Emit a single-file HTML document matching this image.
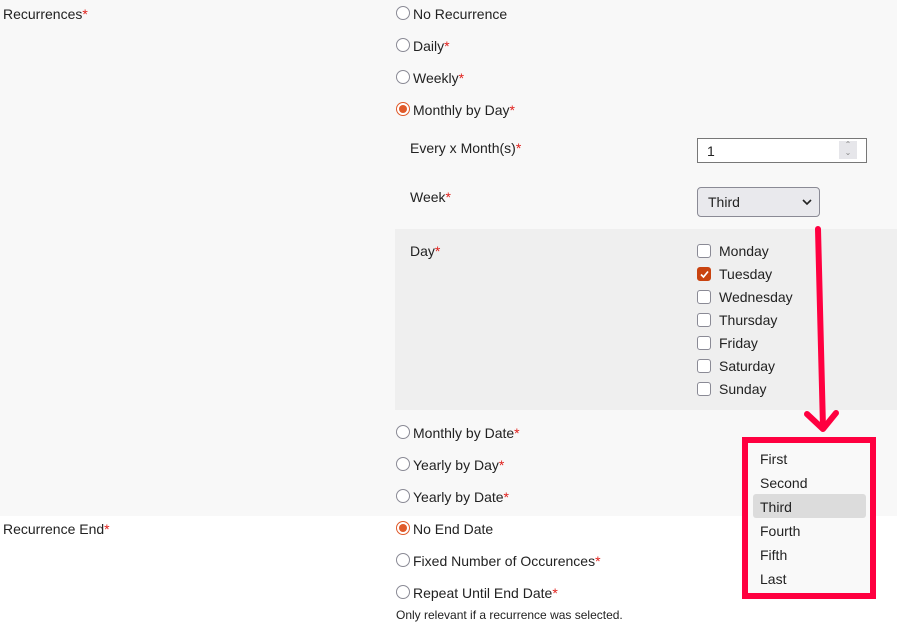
<!DOCTYPE html>
<html><head><meta charset="utf-8"><style>
body{margin:0;width:897px;height:632px;position:relative;overflow:hidden;background:#fff;font-family:"Liberation Sans",sans-serif;font-size:14px;color:#222}
.a{position:absolute;white-space:nowrap;line-height:16px}
.r{color:#e0201c}
.rad{position:absolute;width:12px;height:12px;border:1px solid #8a8a95;border-radius:50%;background:#fff;margin-top:-1px}
.rad.on{border-color:#e05a2a;}
.rad.on:after{content:"";position:absolute;left:2px;top:2px;width:8px;height:8px;border-radius:50%;background:#e05a2a}
.cb{position:absolute;left:697px;width:12px;height:12px;border:1px solid #8a8a95;border-radius:3px;background:#fff;margin-top:-1px}
</style></head><body>
<div style="position:absolute;left:0;top:0;width:897px;height:516px;background:#f8f8f8"></div>
<div style="position:absolute;left:395px;top:229px;width:502px;height:181px;background:#efefef"></div>

<div class="a" style="left:3px;top:6px">Recurrences<span class="r">*</span></div>
<div class="a" style="left:3px;top:521px">Recurrence End<span class="r">*</span></div>

<div class="rad" style="left:396px;top:7px"></div><div class="a" style="left:413px;top:6px">No Recurrence</div>
<div class="rad" style="left:396px;top:39px"></div><div class="a" style="left:413px;top:38px">Daily<span class="r">*</span></div>
<div class="rad" style="left:396px;top:71px"></div><div class="a" style="left:413px;top:70px">Weekly<span class="r">*</span></div>
<div class="rad on" style="left:396px;top:103px"></div><div class="a" style="left:413px;top:102px">Monthly by Day<span class="r">*</span></div>

<div class="a" style="left:410px;top:140px">Every x Month(s)<span class="r">*</span></div>
<div style="position:absolute;left:697px;top:138px;width:168px;height:23px;border:1px solid #777;background:#fff"></div>
<div class="a" style="left:707px;top:143px">1</div>
<div style="position:absolute;left:839px;top:141px;width:18px;height:18px;background:#e6e6ea;color:#888;font-size:8px;line-height:8px;text-align:center">&#8963;<br>&#8964;</div>

<div class="a" style="left:410px;top:189px">Week<span class="r">*</span></div>
<div style="position:absolute;left:697px;top:187px;width:121px;height:28px;border:1px solid #8a8a95;border-radius:4px;background:#e9e9ed"></div>
<div class="a" style="left:708px;top:194px">Third</div>
<svg style="position:absolute;left:802px;top:198px" width="10" height="8"><path d="M1 2 L5 6 L9 2" stroke="#222" stroke-width="1.6" fill="none"/></svg>

<div class="a" style="left:410px;top:243px">Day<span class="r">*</span></div>
<div class="cb" style="top:245px"></div><div class="a" style="left:719px;top:243px">Monday</div>
<div class="cb" style="top:268px;background:#c9430f;border-color:#c9430f"></div>
<svg style="position:absolute;left:699px;top:269px" width="11" height="11"><path d="M2 5.5 L4.5 8 L9 2.5" stroke="#fff" stroke-width="1.7" fill="none"/></svg>
<div class="a" style="left:719px;top:266px">Tuesday</div>
<div class="cb" style="top:291px"></div><div class="a" style="left:719px;top:289px">Wednesday</div>
<div class="cb" style="top:314px"></div><div class="a" style="left:719px;top:312px">Thursday</div>
<div class="cb" style="top:337px"></div><div class="a" style="left:719px;top:335px">Friday</div>
<div class="cb" style="top:360px"></div><div class="a" style="left:719px;top:358px">Saturday</div>
<div class="cb" style="top:383px"></div><div class="a" style="left:719px;top:381px">Sunday</div>

<div class="rad" style="left:396px;top:426px"></div><div class="a" style="left:413px;top:425px">Monthly by Date<span class="r">*</span></div>
<div class="rad" style="left:396px;top:458px"></div><div class="a" style="left:413px;top:457px">Yearly by Day<span class="r">*</span></div>
<div class="rad" style="left:396px;top:490px"></div><div class="a" style="left:413px;top:489px">Yearly by Date<span class="r">*</span></div>
<div class="rad on" style="left:396px;top:522px"></div><div class="a" style="left:413px;top:521px">No End Date</div>
<div class="rad" style="left:396px;top:554px"></div><div class="a" style="left:413px;top:553px">Fixed Number of Occurences<span class="r">*</span></div>
<div class="rad" style="left:396px;top:586px"></div><div class="a" style="left:413px;top:585px">Repeat Until End Date<span class="r">*</span></div>
<div class="a" style="left:396px;top:607px;font-size:12px">Only relevant if a recurrence was selected.</div>

<div style="position:absolute;left:742px;top:437px;width:122px;height:150px;border:6px solid #ff0040;background:#f9f9f9"></div>
<div style="position:absolute;left:753px;top:494px;width:113px;height:24px;background:#dcdcdc;border-radius:3px"></div>
<div class="a" style="left:760px;top:451px">First</div>
<div class="a" style="left:760px;top:475px">Second</div>
<div class="a" style="left:760px;top:499px">Third</div>
<div class="a" style="left:760px;top:523px">Fourth</div>
<div class="a" style="left:760px;top:547px">Fifth</div>
<div class="a" style="left:760px;top:571px">Last</div>

<svg style="position:absolute;left:0;top:0" width="897" height="632"><g stroke="#ff0040" stroke-width="6" stroke-linecap="round" stroke-linejoin="round" fill="none"><path d="M818 229 L823 428"/><path d="M807 414 L823 429 L836 413"/></g></svg>
</body></html>
